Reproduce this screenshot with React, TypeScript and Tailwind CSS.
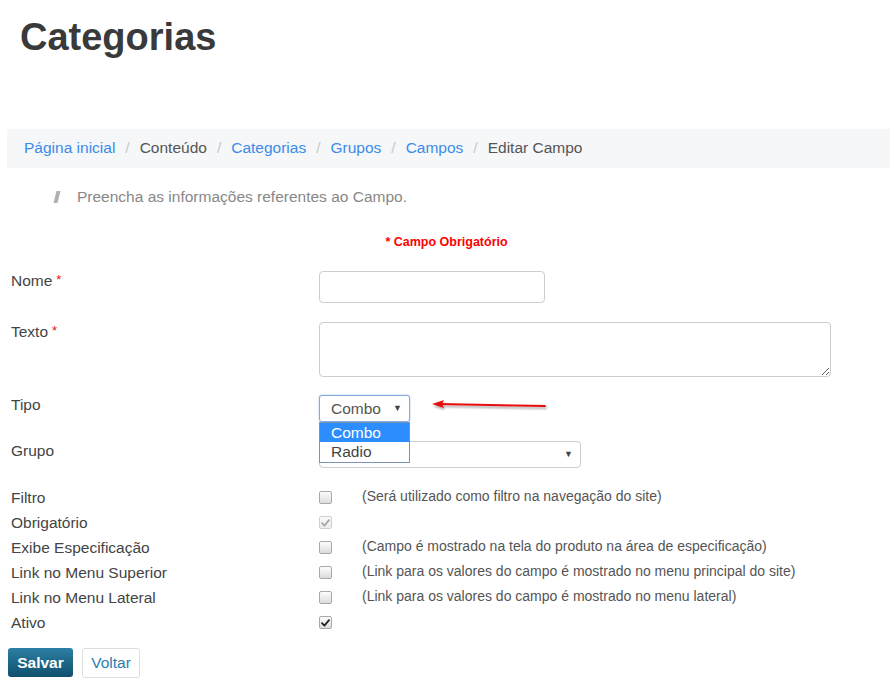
import React from "react";

const Check = ({ color }: { color: string }) => (
  <svg width="9" height="8" viewBox="0 0 9 8" className="block">
    <path d="M1 4.2 L3.4 6.6 L8 1.2" fill="none" stroke={color} strokeWidth="1.8" strokeLinecap="round" strokeLinejoin="round" />
  </svg>
);

const Box = ({ checked, disabled }: { checked?: boolean; disabled?: boolean }) => (
  <span
    className={
      "flex items-center justify-center w-[13px] h-[13px] rounded-[2px] border " +
      (disabled
        ? "border-[#d0d0d0] bg-gradient-to-b from-[#fafafa] to-[#ececec]"
        : "border-[#a9a9a9] bg-gradient-to-b from-[#fdfdfd] to-[#dcdcdc]")
    }
  >
    {checked ? <Check color={disabled ? "#a8a8a8" : "#222"} /> : null}
  </span>
);

const checkRows: { label: string; checked?: boolean; disabled?: boolean; help?: string }[] = [
  { label: "Filtro", help: "(Será utilizado como filtro na navegação do site)" },
  { label: "Obrigatório", checked: true, disabled: true },
  { label: "Exibe Especificação", help: "(Campo é mostrado na tela do produto na área de especificação)" },
  { label: "Link no Menu Superior", help: "(Link para os valores do campo é mostrado no menu principal do site)" },
  { label: "Link no Menu Lateral", help: "(Link para os valores do campo é mostrado no menu lateral)" },
  { label: "Ativo", checked: true },
];

const Sep = () => <span className="mx-[10px] text-[#c9c9c9]">/</span>;

export default function App() {
  return (
    <div className="relative w-[890px] h-[700px] overflow-hidden bg-white font-['Liberation_Sans',Arial,sans-serif] text-[#444]">
      <h1 className="pl-[20px] pt-[14px] text-[38px] leading-[46px] font-bold text-[#3a3a3a]">Categorias</h1>

      <div className="pl-[7px]">
        <nav className="mt-[69px] h-[39px] bg-[#f5f7f9] flex items-center pl-[17px] pb-[1px] text-[15.5px] whitespace-nowrap">
          <span className="text-[#3b8ce8]">Página inicial</span>
          <Sep />
          <span className="text-[#555]">Conteúdo</span>
          <Sep />
          <span className="text-[#3b8ce8]">Categorias</span>
          <Sep />
          <span className="text-[#3b8ce8]">Grupos</span>
          <Sep />
          <span className="text-[#3b8ce8]">Campos</span>
          <Sep />
          <span className="text-[#555]">Editar Campo</span>
        </nav>

        <div className="mt-[19px] h-[20px] flex items-center pl-[48px]">
          <span className="w-[4px] h-[12px] bg-[#b0b0b0] -skew-x-[14deg]" />
          <span className="ml-[18px] text-[15.5px] text-[#888]">Preencha as informações referentes ao Campo.</span>
        </div>

        <div className="mt-[27px] h-[16px] leading-[16px] text-center text-[12.5px] font-bold text-[#f00] pr-[4px]">
          * Campo Obrigatório
        </div>

        {/* Nome */}
        <div className="mt-[21px] flex">
          <label className="w-[312px] pl-[4px] text-[15.5px] leading-[20px] text-[#444]">
            Nome<span className="ml-[4px] text-[#ee1111] text-[13px] relative -top-[2px]">*</span>
          </label>
          <input className="w-[226px] h-[32px] border border-[#cccccc] rounded-[4px] bg-white" />
        </div>

        {/* Texto */}
        <div className="mt-[19px] flex">
          <label className="w-[312px] pl-[4px] text-[15.5px] leading-[20px] text-[#444]">
            Texto<span className="ml-[4px] text-[#ee1111] text-[13px] relative -top-[2px]">*</span>
          </label>
          <textarea className="w-[512px] h-[55px] border border-[#cccccc] rounded-[4px] bg-white resize" />
        </div>

        {/* Tipo */}
        <div className="mt-[18px] flex">
          <label className="w-[312px] pl-[4px] text-[15.5px] leading-[20px] text-[#444]">Tipo</label>
          <div className="relative z-10 w-[91px] h-[27px]">
            <div className="w-[91px] h-[27px] border border-[#86a9dc] rounded-[3px] shadow-[0_0_2px_rgba(100,150,220,0.6)] bg-white flex items-center pl-[11px] pr-[7px] text-[15.5px] text-[#555]">
              <span className="flex-1">Combo</span>
              <span className="text-[9px] text-[#444]">▼</span>
            </div>
            <div className="absolute left-0 top-[27px] w-[91px] border border-[#7b93b5] bg-white text-[15.5px] leading-[19px]">
              <div className="h-[19px] bg-[#2c8dff] text-white pl-[11px]">Combo</div>
              <div className="h-[20px] text-[#444] pl-[11px]">Radio</div>
            </div>
          </div>
        </div>

        {/* Grupo */}
        <div className="mt-[19px] flex">
          <label className="w-[312px] pl-[4px] text-[15.5px] leading-[20px] text-[#444]">Grupo</label>
          <div className="w-[262px] h-[27px] border border-[#cccccc] rounded-[4px] bg-white flex items-center justify-end pr-[7px]">
            <span className="text-[9px] text-[#444]">▼</span>
          </div>
        </div>

        {/* checkbox rows */}
        <div className="mt-[17px]">
          {checkRows.map((r) => (
            <div key={r.label} className="h-[25px] flex items-center">
              <span className="w-[312px] pl-[4px] text-[15.5px] text-[#444]">{r.label}</span>
              <span className="w-[43px]">
                <Box checked={r.checked} disabled={r.disabled} />
              </span>
              {r.help ? <span className="text-[14px] text-[#555] -mt-[2px]">{r.help}</span> : null}
            </div>
          ))}
        </div>

        <div className="mt-[13px] flex items-start">
          <button className="ml-[1px] w-[65px] h-[29px] rounded-[3px] bg-gradient-to-b from-[#2b7fa3] to-[#11506d] text-white font-bold text-[15.5px]">
            Salvar
          </button>
          <button className="ml-[9px] w-[58px] h-[30px] rounded-[3px] border border-[#dddddd] bg-white text-[#2a7cb2] text-[15.5px]">
            Voltar
          </button>
        </div>
      </div>

      {/* red annotation arrow */}
      <svg className="absolute left-[426px] top-[394px] z-20" width="130" height="22" viewBox="0 0 130 22">
        <defs>
          <filter id="sh" x="-10%" y="-50%" width="120%" height="220%">
            <feDropShadow dx="1" dy="2" stdDeviation="1.2" floodColor="#000" floodOpacity="0.35" />
          </filter>
        </defs>
        <g filter="url(#sh)">
          <path d="M14 10 L119 12" stroke="#e81010" strokeWidth="2" fill="none" strokeLinecap="round" />
          <path d="M6 10 L18 6 L16 10 L18 14 Z" fill="#e81010" />
        </g>
      </svg>
    </div>
  );
}
